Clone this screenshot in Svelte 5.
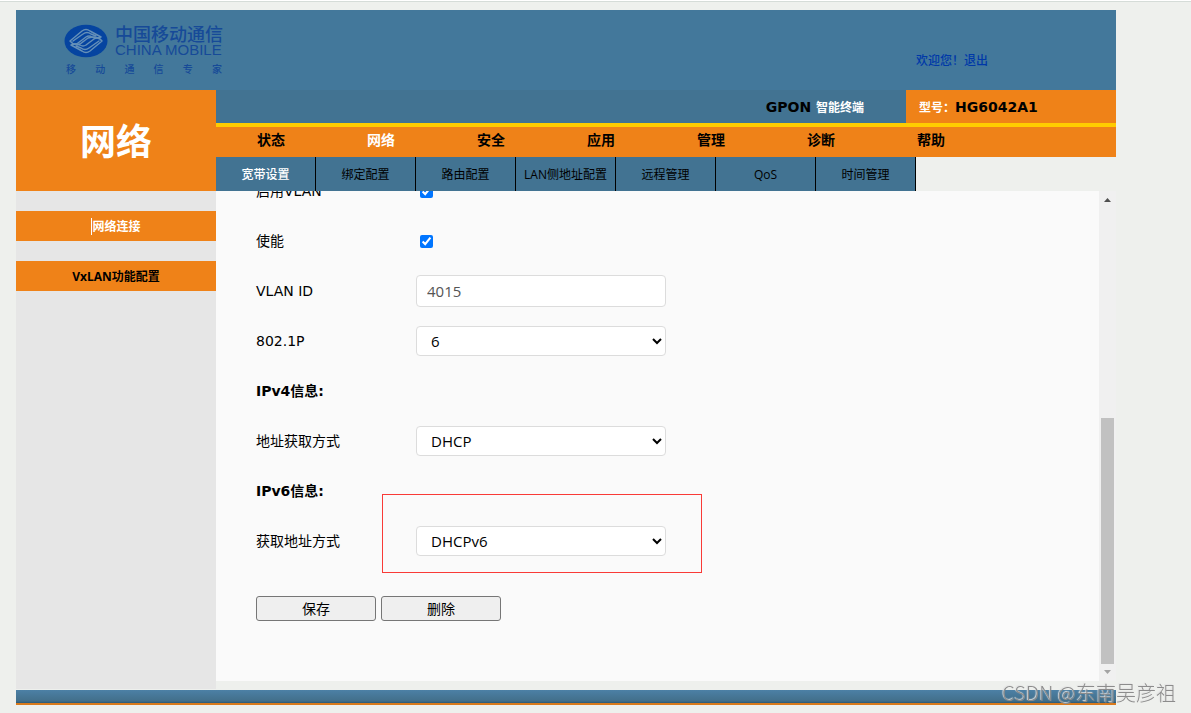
<script>
	let menus = ['状态', '网络', '安全', '应用', '管理', '诊断', '帮助'];
	let subMenus = ['宽带设置', '绑定配置', '路由配置', 'LAN侧地址配置', '远程管理', 'QoS', '时间管理'];
	let slogan = ['移', '动', '通', '信', '专', '家'];

	let activeMenu = '网络';
	let activeSub = '宽带设置';

	let vlanOn = true;
	let enabled = true;
	let vlanId = '4015';
	let priority = '6';
	let ipv4Mode = 'DHCP';
	let ipv6Mode = 'DHCPv6';
</script>

<div class="page">
	<header class="banner">
		<div class="logo">
			<div class="logo-top">
				<svg class="emblem" viewBox="0 0 44 34" width="44" height="34" aria-hidden="true">
					<ellipse cx="22" cy="17" rx="21.5" ry="16.3" fill="#0544a0" />
					<g fill="none" stroke="#6590b8" stroke-width="1.5" stroke-linecap="round" stroke-linejoin="round">
						<path d="M6 17 L18 7 Q22 4 26 7 L37 13 Q32 15 28 13 Q25 11 22 13 L14 19 Q10 22 6 17" />
						<path d="M9 17 L19 10 Q23 7 27 10 L32 12" />
						<path d="M38 17 L26 27 Q22 30 18 27 L7 21 Q12 19 16 21 Q19 23 22 21 L30 15 Q34 12 38 17" />
						<path d="M35 17 L25 24 Q21 27 17 24 L12 22" />
						<path d="M13 21 Q17 20 20 17 L24 14 Q27 13 31 13" />
					</g>
				</svg>
				<div class="logo-name">
					<span class="name-cn">中国移动通信</span>
					<span class="name-en">CHINA MOBILE</span>
				</div>
			</div>
			<div class="slogan">
				{#each slogan as word}
					<span>{word}</span>
				{/each}
			</div>
		</div>
		<div class="welcome">欢迎您！<a href="#logout">退出</a></div>
	</header>

	<div class="main">
		<aside class="left">
			<h1>网络</h1>
			<nav class="side-menu">
				<a href="#connect" class="current"><span class="caret">网络连接</span></a>
				<a href="#vxlan">VxLAN功能配置</a>
			</nav>
		</aside>

		<section class="right">
			<div class="device">
				<div class="terminal">GPON <span>智能终端</span></div>
				<div class="model"><span>型号：</span>HG6042A1</div>
			</div>

			<nav class="menu">
				{#each menus as item}
					<a href="#menu" class:active={item === activeMenu} on:click|preventDefault={() => (activeMenu = item)}>{item}</a>
				{/each}
			</nav>

			<nav class="sub-menu">
				{#each subMenus as item}
					<a href="#sub" class:active={item === activeSub} on:click|preventDefault={() => (activeSub = item)}>{item}</a>
				{/each}
			</nav>

			<div class="content">
				<form on:submit|preventDefault>
					<div class="row">
						<label for="vlan-on">启用VLAN</label>
						<input id="vlan-on" type="checkbox" bind:checked={vlanOn} />
					</div>
					<div class="row">
						<label for="enabled">使能</label>
						<input id="enabled" type="checkbox" bind:checked={enabled} />
					</div>
					<div class="row">
						<label for="vlan-id">VLAN ID</label>
						<input id="vlan-id" class="text" type="text" bind:value={vlanId} />
					</div>
					<div class="row">
						<label for="priority">802.1P</label>
						<select id="priority" bind:value={priority}>
							{#each ['0', '1', '2', '3', '4', '5', '6', '7'] as p}
								<option value={p}>{p}</option>
							{/each}
						</select>
					</div>
					<h2 class="row">IPv4信息:</h2>
					<div class="row">
						<label for="ipv4">地址获取方式</label>
						<select id="ipv4" bind:value={ipv4Mode}>
							<option value="DHCP">DHCP</option>
							<option value="Static">Static</option>
							<option value="PPPoE">PPPoE</option>
						</select>
					</div>
					<h2 class="row">IPv6信息:</h2>
					<div class="row">
						<label for="ipv6">获取地址方式</label>
						<select id="ipv6" bind:value={ipv6Mode}>
							<option value="DHCPv6">DHCPv6</option>
							<option value="SLAAC">SLAAC</option>
						</select>
						<div class="mark"></div>
					</div>
					<div class="buttons">
						<button type="submit">保存</button>
						<button type="button">删除</button>
					</div>
				</form>

				<!-- Scroll bar -->
				<div class="scrollbar" aria-hidden="true">
					<svg viewBox="0 0 17 17" width="17" height="17"><path d="M5 11 L8.5 7 L12 11 Z" fill="#505050" /></svg>
					<div class="track"><div class="thumb"></div></div>
					<svg viewBox="0 0 17 17" width="17" height="17"><path d="M5 6 L8.5 10 L12 6 Z" fill="#a3a3a3" /></svg>
				</div>
			</div>
		</section>
	</div>

	<footer></footer>
</div>

<div class="watermark">CSDN @东南吴彦祖</div>

<style>
	:global(body) {
		background: #eef0ed;
		border-top: 1px solid #fff;
		font-family: 'DejaVu Sans', 'Noto Sans CJK SC', sans-serif;
		font-size: 14px;
		color: #000;
	}

	:global(#app) {
		border-top: 1px solid #d5dcd8;
	}

	a {
		color: inherit;
		text-decoration: none;
	}

	.page {
		max-width: 1100px;
		margin: 8px 16px;
	}

	.banner {
		display: flex;
		justify-content: space-between;
		height: 80px;
		background: #43789b;
	}

	.logo {
		display: flex;
		flex-direction: column;
		gap: 4px;
		padding: 14px 0 0 48px;
		color: #164a98;
	}

	.logo-top {
		display: flex;
		gap: 7px;
	}

	.logo-name {
		display: flex;
		flex-direction: column;
	}

	.name-cn {
		font-family: 'Noto Sans CJK SC', sans-serif;
		font-size: 18px;
		font-weight: 500;
		line-height: 18px;
	}

	.name-en {
		font-family: 'Liberation Sans', sans-serif;
		font-size: 15px;
		line-height: 16px;
	}

	.slogan {
		display: flex;
		justify-content: space-between;
		width: 156px;
		padding-left: 2px;
		font-size: 10px;
		font-weight: 500;
		line-height: 16px;
	}

	.welcome {
		width: 200px;
		padding-top: 42px;
		font-size: 12px;
		line-height: 18px;
		color: #0038a8;
		font-weight: 500;
	}

	.main {
		display: grid;
		grid-template-columns: 200px 1fr;
	}

	.left {
		background: #e6e6e6;
	}

	h1 {
		margin: 0;
		padding-top: 4px;
		background: #ef8218;
		color: #fff;
		font-size: 36px;
		line-height: 97px;
		text-align: center;
	}

	.side-menu {
		display: flex;
		flex-direction: column;
		gap: 20px;
		padding-top: 20px;
	}

	.side-menu a {
		height: 30px;
		background: #ef8218;
		font-size: 12px;
		font-weight: bold;
		font-family: 'Open Sans', 'Noto Sans CJK SC', sans-serif;
		line-height: 32px;
		text-align: center;
	}

	.side-menu .current {
		color: #fff;
	}

	.caret {
		border-left: 1px solid #fff;
	}

	.right {
		min-width: 0;
		padding-bottom: 8px;
	}

	.device {
		display: flex;
		justify-content: flex-end;
		background: #427392;
		font-weight: bold;
		line-height: 35px;
		height: 33px;
	}

	.device span {
		color: #fff;
		font-size: 12px;
	}

	.terminal {
		padding-right: 42px;
	}

	.model {
		width: 197px;
		padding-left: 13px;
		background: #ef8218;
	}

	.menu {
		display: flex;
		height: 30px;
		border-top: 4px solid #fc0;
		background: #ef8218;
	}

	.menu a {
		width: 110px;
		font-weight: bold;
		line-height: 27px;
		text-align: center;
	}

	.sub-menu {
		display: flex;
		height: 34px;
	}

	.sub-menu a {
		box-sizing: border-box;
		width: 100px;
		border-right: 1px solid #000;
		background: #427392;
		font-family: 'Open Sans', 'Noto Sans CJK SC', sans-serif;
		font-size: 12px;
		line-height: 36px;
		text-align: center;
		white-space: nowrap;
	}

	.menu .active,
	.sub-menu .active {
		color: #fff;
	}

	.sub-menu .active {
		font-weight: 500;
	}

	.content {
		display: flex;
		overflow: hidden;
		background: #fafafa;
	}

	/* list is scrolled half a row down */
	form {
		flex: 1;
		margin-top: -25px;
		padding: 0 40px 60px;
	}

	.row {
		position: relative;
		display: flex;
		align-items: center;
		height: 50px;
		margin: 0;
		font-size: 14px;
		line-height: 20px;
	}

	.row label {
		width: 160px;
	}

	input[type='checkbox'] {
		width: 13px;
		height: 13px;
		margin: 0 4px;
	}

	.text,
	select {
		box-sizing: border-box;
		width: 250px;
		height: 30px;
		padding: 0 10px;
		border: 1px solid #dcdcdc;
		border-radius: 4px;
		background-color: #fff;
		color: #000;
		font-family: 'Open Sans', 'Noto Sans CJK SC', sans-serif;
		font-size: 15px;
	}

	.text {
		height: 32px;
		color: #555;
	}

	/* red frame round the IPv6 mode */
	.mark {
		box-sizing: border-box;
		position: absolute;
		top: -22px;
		left: 126px;
		width: 320px;
		height: 79px;
		border: 1px solid #f93a37;
		pointer-events: none;
	}

	.buttons {
		display: flex;
		gap: 5px;
		padding-top: 30px;
	}

	button {
		width: 120px;
		height: 25px;
		padding: 0;
		border: 1px solid #767676;
		border-radius: 3px;
		background: #efefef;
		color: #000;
		font-family: inherit;
		font-size: 14px;
		line-height: 20px;
	}

	.scrollbar {
		display: flex;
		flex-direction: column;
		width: 17px;
		background: #f0f0f0;
	}

	.track {
		display: flex;
		flex: 1;
		flex-direction: column;
		justify-content: flex-end;
		padding: 0 2px;
	}

	.thumb {
		height: 54%;
		background: #c1c1c1;
	}

	footer {
		height: 13px;
		margin-top: 1px;
		border-bottom: 2px solid #d97a1c;
		background: linear-gradient(#4c80a6, #426f8a 85%, #2c5875);
	}

	.watermark {
		position: fixed;
		right: 15px;
		bottom: 6px;
		color: #8c8c8c;
		font-family: 'Noto Sans CJK SC', sans-serif;
		font-size: 20px;
		font-weight: 300;
		line-height: 28px;
		text-shadow: -1px -1px 1px #e4e4e4;
	}
</style>
